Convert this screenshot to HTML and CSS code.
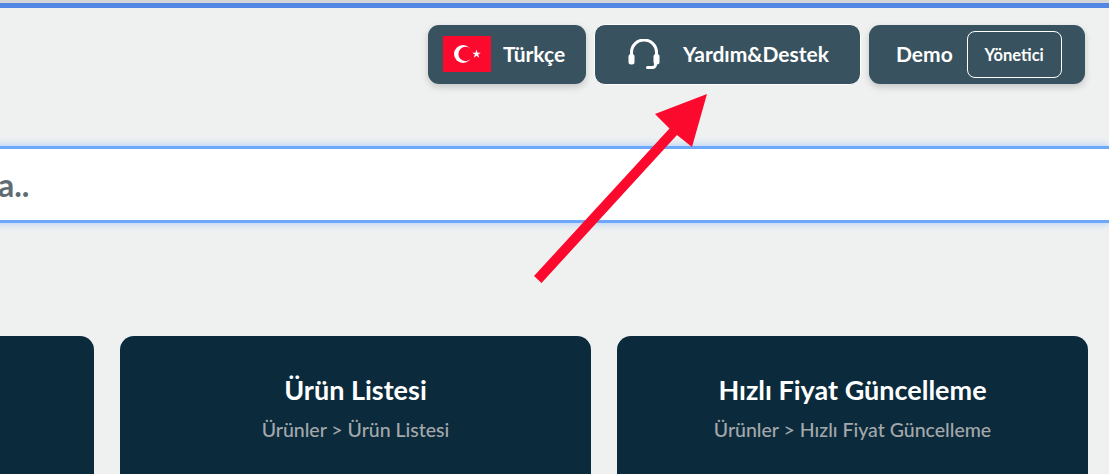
FILE: index.html
```html
<!DOCTYPE html>
<html lang="tr">
<head>
    <meta charset="UTF-8">
    <meta name="viewport" content="width=device-width, initial-scale=1.0">
    <title>Panel</title>
    <link rel="stylesheet" href="styles.css">
</head>
<body>
    <div class="page">
        <!-- Top bar -->
        <div class="top-line"></div>
        <div class="top-actions">
            <div class="top-btn lang-btn">
                <svg class="flag" viewBox="0 0 48 36">
                    <rect width="48" height="36" fill="#fb0a2e"/>
                    <circle cx="20" cy="18" r="9" fill="#fff"/>
                    <circle cx="22.6" cy="18" r="7.2" fill="#fb0a2e"/>
                    <polygon fill="#fff" points="33.5,13.6 34.5,16.7 37.8,16.7 35.1,18.6 36.2,21.8 33.5,19.8 30.8,21.8 31.9,18.6 29.2,16.7 32.5,16.7"/>
                </svg>
                <span class="btn-label">Türkçe</span>
            </div>
            <div class="top-btn help-btn">
                <svg class="headset" viewBox="0 0 32 30" fill="none" stroke="#fff" stroke-width="3" stroke-linecap="round">
                    <path d="M3.500 17v-3.500a12.500 12.500 0 0 1 25 0V17"/>
                    <rect x="0.500" y="15" width="6" height="10.500" rx="2.500" fill="#fff" stroke="none"/>
                    <rect x="25.500" y="15" width="6" height="10.500" rx="2.500" fill="#fff" stroke="none"/>
                    <path d="M27.500 25v.500a3 3 0 0 1-3 3h-5"/>
                </svg>
                <span class="btn-label">Yardım&amp;Destek</span>
            </div>
            <div class="top-btn user-btn">
                <span class="btn-label">Demo</span>
                <span class="role">Yönetici</span>
            </div>
        </div>

        <!-- Search -->
        <div class="search-box">a..</div>

        <!-- Shortcut cards -->
        <div class="cards">
            <div class="card"></div>
            <div class="card">
                <h3>Ürün Listesi</h3>
                <p>Ürünler &gt; Ürün Listesi</p>
            </div>
            <div class="card">
                <h3>Hızlı Fiyat Güncelleme</h3>
                <p>Ürünler &gt; Hızlı Fiyat Güncelleme</p>
            </div>
        </div>
    </div>

    <!-- Annotation arrow -->
    <svg class="arrow" viewBox="0 0 1109 474">
        <polygon fill="#fb0a2e" points="534,276 669.500,128.500 655,114 707,94 692,147 677,135 541.500,283"/>
    </svg>
</body>
</html>
```

FILE: styles.css
```css
html, body {
    margin: 0;
    height: 474px;
    overflow: hidden;
}
body {
    font-family: "Lato", sans-serif;
    background-color: #eff1f1;
    position: relative;
}
.page {
    width: 1486px;
    margin-left: -377px;
}
.top-line {
    height: 5px;
    background-color: #5287e3;
    border-top: 3px solid #d4d6d8;
    margin-bottom: 16px;
}
.top-actions {
    display: flex;
    justify-content: flex-end;
    gap: 8px;
    padding-right: 24px;
    height: 60px;
    align-items: center;
}
.top-btn {
    display: flex;
    align-items: center;
    height: 59px;
    box-sizing: border-box;
    background-color: #38535f;
    color: #fff;
    border-radius: 11px;
    font-size: 21px;
    font-weight: 700;
    box-shadow: 0 3px 7px rgba(0,0,0,0.18);
}
.btn-label {
    margin-bottom: 2px;
}
.lang-btn {
    width: 158px;
    padding-left: 15px;
    gap: 12px;
}
.flag {
    width: 48px;
    height: 36px;
}
.help-btn {
    width: 267px;
    height: 61px;
    padding-left: 33px;
    gap: 23px;
    border: 1px solid #fff;
    box-shadow: none;
}
.headset {
    width: 32px;
    height: 30px;
}
.user-btn {
    width: 216px;
    padding-left: 27px;
    gap: 14px;
}
.role {
    display: flex;
    align-items: center;
    justify-content: center;
    width: 95px;
    height: 47px;
    padding-top: 2px;
    box-sizing: border-box;
    border: 1px solid #fff;
    border-radius: 8px;
    font-size: 16.500px;
}
.search-box {
    margin-top: 62px;
    height: 77px;
    box-sizing: border-box;
    display: flex;
    align-items: center;
    padding-left: 375px;
    background-color: #fff;
    border-top: 3px solid #6ea8fb;
    border-bottom: 3px solid #6ea8fb;
    box-shadow: 0 0 8px rgba(110,168,251,0.6);
    color: #5f6d73;
    font-size: 32px;
    font-weight: 700;
}
.cards {
    display: grid;
    grid-template-columns: repeat(3, 471px);
    gap: 26px;
    margin-top: 113px;
}
.card {
    height: 200px;
    padding-top: 38px;
    box-sizing: border-box;
    background-color: #0b2b3d;
    border-radius: 14px;
    text-align: center;
    color: #fff;
}
.card h3 {
    margin: 0;
    font-size: 27px;
    font-weight: 700;
    line-height: 32px;
}
.card p {
    margin: 12px 0 0;
    font-size: 19.500px;
    font-weight: 500;
    line-height: 24px;
    color: #a5a8ab;
}
.arrow {
    position: absolute;
    left: 0;
    top: 0;
    width: 1109px;
    height: 474px;
}
```
